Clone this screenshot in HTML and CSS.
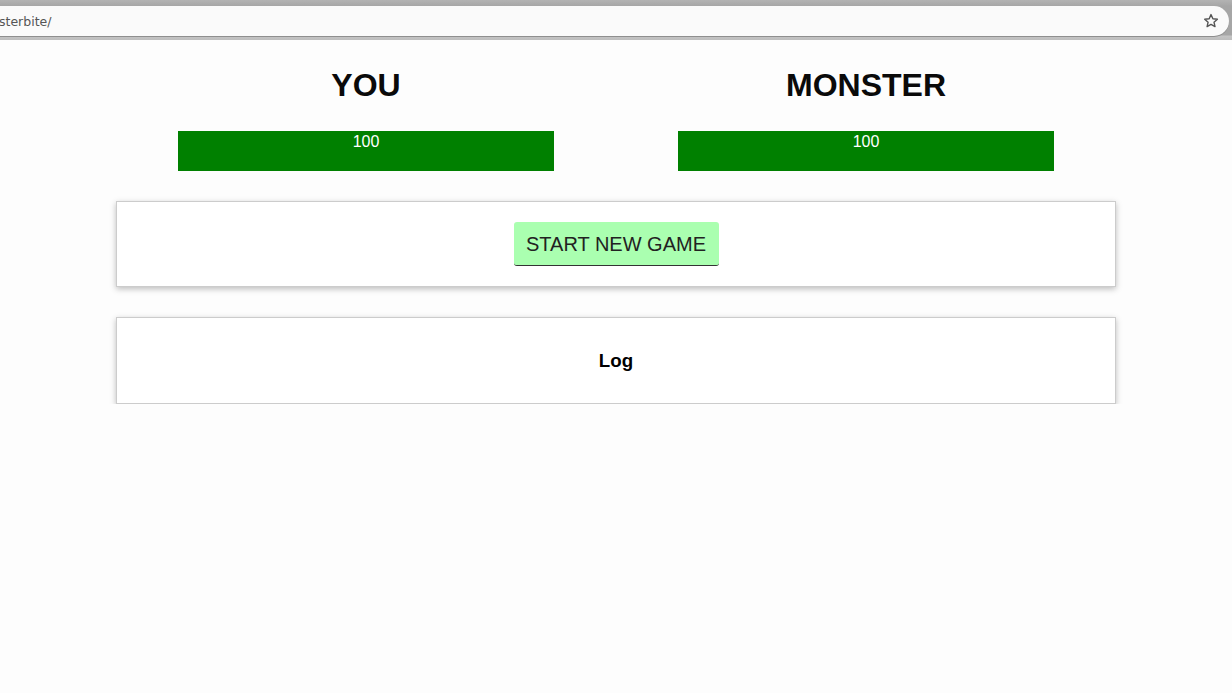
FILE: index.html
```html
<!DOCTYPE html>
<html>
<head>
<meta charset="utf-8">
<title>Monster Slayer</title>
<link rel="stylesheet" href="styles.css">
</head>
<body>
<div class="chrome">
  <div class="omnibox">
    <span class="url">sterbite/</span>
    <svg class="star" width="16" height="16" viewBox="0 0 16 16"><path d="M8 1.6l1.9 4.1 4.5.5-3.4 3 1 4.4L8 11.4l-3.9 2.2 1-4.4-3.4-3 4.5-.5z" fill="none" stroke="#555" stroke-width="1.4" stroke-linejoin="round"/></svg>
  </div>
</div>
<main class="app">
  <section class="players">
    <div class="player">
      <h1 class="name">YOU</h1>
      <div class="bar"><div class="fill" style="width:100%">100</div></div>
    </div>
    <div class="player">
      <h1 class="name">MONSTER</h1>
      <div class="bar"><div class="fill" style="width:100%">100</div></div>
    </div>
  </section>
  <section class="card controls">
    <button class="start">START NEW GAME</button>
  </section>
  <section class="card log">
    <h3 class="log-title">Log</h3>
  </section>
</main>
</body>
</html>
```
FILE: styles.css
```css
* { box-sizing: border-box; }
html, body { margin: 0; padding: 0; background: #fdfdfd; }
body { font-family: "Liberation Sans", Arial, sans-serif; color: #000; }

.chrome {
  height: 40px;
  background: linear-gradient(#b3b3b3 0, #a6a6a6 6px, #a6a6a6 35px, #c4c4c4 36px, #bdbdbd 40px);
  padding: 6px 3px 4px 0;
  display: flex;
}
.omnibox {
  flex: 1;
  height: 30px;
  background: #fafafa;
  border-radius: 0 15px 15px 0;
  display: flex;
  align-items: center;
  justify-content: space-between;
  padding: 0 10px 0 0;
  box-shadow: 0 1px 0 #8e8e8e;
}
.url {
  margin-left: -1px;
  color: #555;
  font-family: "DejaVu Sans", "Liberation Sans", sans-serif;
  font-size: 12.5px;
}
.star { display: block; }

.app {
  width: 1000px;
  margin: 0 auto;
  padding-top: 27px;
}
.players {
  display: flex;
}
.player {
  flex: 1;
  display: flex;
  flex-direction: column;
  align-items: center;
}
.name {
  margin: 0;
  font-size: 32px;
  line-height: 37px;
  font-weight: bold;
  color: #0a0a0a;
}
.bar {
  margin-top: 27px;
  width: 376px;
  height: 40px;
  background: #fff;
}
.fill {
  height: 100%;
  background: #008000;
  color: #fff;
  font-size: 16px;
  line-height: 22px;
  text-align: center;
}
.card {
  background: #fff;
  border: 1px solid #ccc;
  box-shadow: 0 2px 6px rgba(0,0,0,0.26);
  text-align: center;
}
.controls {
  margin-top: 30px;
  padding: 20px;
  display: flex;
  justify-content: center;
}
.start {
  font-family: "Liberation Sans", Arial, sans-serif;
  font-size: 20px;
  line-height: 23px;
  color: #222;
  background: #aaffb0;
  border: none;
  border-bottom: 1px solid #333;
  border-radius: 3px;
  padding: 11px 12px 10px;
  width: 205px;
  height: 44px;
  cursor: pointer;
}
.log {
  margin-top: 30px;
  padding: 32px 20px 32px;
  height: 87px;
}
.log-title {
  margin: 0;
  font-size: 18.72px;
  line-height: 21px;
  font-weight: bold;
}
```
